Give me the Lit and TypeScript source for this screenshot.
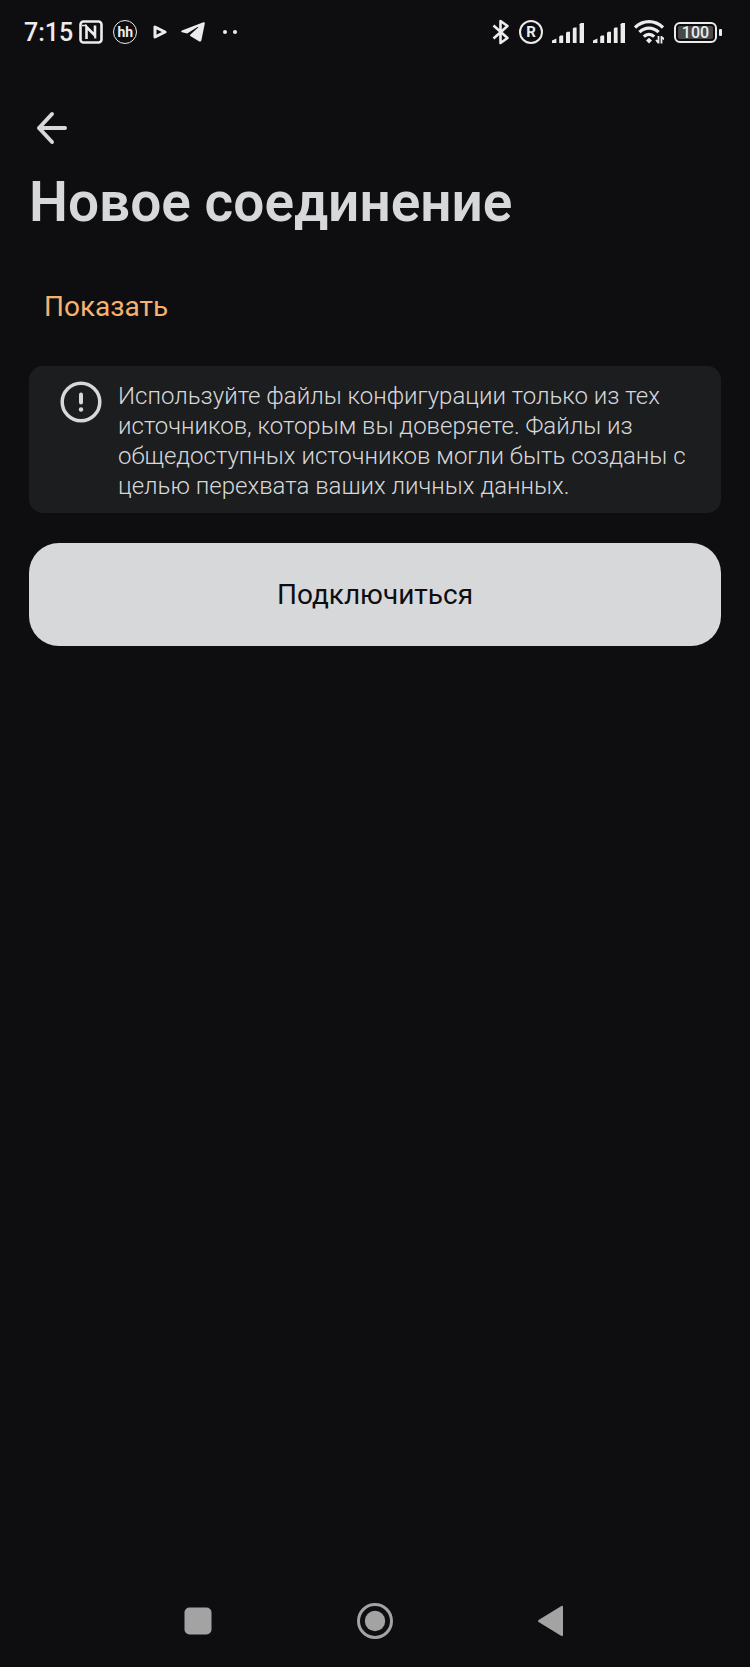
import { LitElement, html, css, svg } from "lit";
import { customElement } from "lit/decorators.js";

@customElement("status-bar")
class StatusBar extends LitElement {
  static styles = css`
    :host {
      display: flex;
      justify-content: space-between;
      align-items: center;
      height: 64px;
      padding: 0 28px 0 24px;
      color: #ececec;
      font-family: Roboto, sans-serif;
    }
    .group {
      display: flex;
      align-items: center;
    }
    .left {
      gap: 10px;
    }
    .right {
      gap: 9px;
    }
    .clock {
      display: flex;
      align-items: center;
      gap: 6px;
      font-size: 25px;
      font-weight: 500;
    }
    svg {
      display: block;
      flex: none;
    }
    .ring {
      box-sizing: border-box;
      display: grid;
      place-items: center;
      width: 24px;
      height: 24px;
      border: 2px solid currentColor;
      border-radius: 50%;
      font-size: 15px;
      line-height: 14px;
      font-weight: 700;
    }
    .ring.thin {
      border-width: 1px;
      font-size: 14px;
    }
    .play {
      margin: 0 4px 0 6px;
    }
    .more {
      margin-left: 8px;
    }
    .battery {
      display: flex;
      align-items: center;
      gap: 2px;
      margin-left: 1px;
    }
    .cell {
      box-sizing: border-box;
      width: 43px;
      height: 21px;
      padding: 2px;
      border: 2px solid currentColor;
      border-radius: 6px;
    }
    .level {
      height: 13px;
      border-radius: 2px;
      background: #48484a;
      font-size: 16px;
      line-height: 14px;
      font-weight: 500;
      text-align: center;
    }
    .nub {
      width: 3px;
      height: 7px;
      border-radius: 1px;
      background: currentColor;
    }
  `;

  private signal() {
    return html`<svg width="32" height="21" viewBox="0 0 32 21" fill="currentColor" aria-hidden="true">
      <path d="M0 21v-2.4L4.4 16.400V21z" />
      <path d="M7.200 21v-6.400l1.200-1h2.800V21z" />
      <path d="M14 21V10.800l1.200-1H18V21z" />
      <path d="M20.800 21V6.600l1.200-1h2.600V21z" />
      <path d="M27.600 21V2.200L28.800 1H32v20z" />
    </svg>`;
  }

  render() {
    return html`
      <div class="group left">
        <div class="clock">
          <span>7:15</span>
          <svg width="24" height="24" viewBox="0 0 24 24" fill="none" stroke="currentColor" aria-hidden="true">
            <rect x="1.500" y="1.500" width="21" height="21" rx="3" stroke-width="2.600" />
            <path d="M7.500 19V7L16 15.500V5.500" stroke-width="2.600" />
            <path d="M3 5.500h5M16 18.500V15" stroke-width="1.600" />
          </svg>
        </div>
        <span class="ring thin">hh</span>
        <svg class="play" width="14" height="14" viewBox="0 0 14 14" fill="none" stroke="currentColor" aria-hidden="true">
          <path d="M2 2v10l10-5z" stroke-width="3" stroke-linejoin="round" />
        </svg>
        <svg width="24" height="20" viewBox="0 0 24 20" fill="currentColor" aria-hidden="true">
          <path d="M22.400.300.900 8.600c-1 .5-.9 1.300.1 1.600l5.200 1.400L16.500 5c.6-.3 1 0 .6.400L9.200 12.800c-.4.4-.3.900.1 1.200l8.600 5.300c1.200.6 2.200.3 2.500-1.100L23.800 1.500c.2-1-.5-1.600-1.400-1.200z" />
        </svg>
        <svg class="more" width="14" height="4" viewBox="0 0 14 4" fill="currentColor" aria-hidden="true">
          <circle cx="2" cy="2" r="2" />
          <circle cx="12" cy="2" r="2" />
        </svg>
      </div>
      <div class="group right">
        <svg width="18" height="26" viewBox="0 0 18 26" fill="none" stroke="currentColor" stroke-width="2.600" aria-hidden="true">
          <path d="M1.500 6.500 15.500 19 8.500 24V2l7 5L1.500 19.500" stroke-linejoin="round" />
        </svg>
        <span class="ring">R</span>
        ${this.signal()} ${this.signal()}
        <svg width="30" height="24" viewBox="0 0 30 24" fill="none" stroke="currentColor" stroke-width="3.200" aria-hidden="true">
          <path d="M1 7.600C9-.4 21-.4 29 7.600" />
          <path d="M5.400 12.200c5.500-5.400 13.700-5.400 19.200 0" />
          <path d="M9.800 16.600c3-3 7.400-3 10.400 0" />
          <path d="M15 17.800l3 2.800-3 2.800-3-2.800z" fill="currentColor" stroke="none" />
          <path d="M24.500 16v7.500M22 20l2.500 3M27.500 23.500V16M30 19.500 27.500 16.500" stroke-width="1.800" />
        </svg>
        <div class="battery">
          <div class="cell"><div class="level">100</div></div>
          <div class="nub"></div>
        </div>
      </div>
    `;
  }
}

@customElement("system-nav")
class SystemNav extends LitElement {
  static styles = css`
    :host {
      display: grid;
      grid-template-columns: repeat(3, 1fr);
      height: 92px;
      padding: 0 110px;
    }
    button {
      display: grid;
      place-items: center;
      padding: 0;
      border: 0;
      background: none;
      color: #a3a3a3;
    }
  `;

  private item(label: string, shape: unknown) {
    return html`<button aria-label=${label}>
      <svg width="38" height="38" viewBox="0 0 38 38" fill="currentColor">${shape}</svg>
    </button>`;
  }

  render() {
    return html`
      ${this.item("Недавние", svg`<rect x="5.500" y="5.500" width="27" height="27" rx="5" />`)}
      ${this.item(
        "Домой",
        svg`<circle cx="19" cy="19" r="16.500" fill="none" stroke="currentColor" stroke-width="3" /><circle cx="19" cy="19" r="10.200" />`
      )}
      ${this.item("Назад", svg`<path d="M6 17.700 28 4.200q2-1 2 1v27.600q0 2-2 1L6 20.300q-2-1.300 0-2.600z" />`)}
    `;
  }
}

@customElement("app-root")
class AppRoot extends LitElement {
  static styles = css`
    :host {
      display: flex;
      flex-direction: column;
      min-height: 100vh;
      background: #0e0e10;
      color: #d7d8da;
      font-family: Roboto, sans-serif;
    }
    main {
      flex: 1;
      display: flex;
      flex-direction: column;
      align-items: flex-start;
      padding: 40px 29px;
    }
    button {
      padding: 0;
      border: 0;
      background: none;
      color: inherit;
      font: inherit;
    }
    svg {
      display: block;
      flex: none;
    }
    .back {
      padding: 6px;
    }
    h1 {
      margin: 12px 0 0;
      font-size: 55px;
      line-height: 72px;
      font-weight: 600;
    }
    .reveal {
      margin-top: 49px;
      padding: 0 15px;
      color: #f6b26f;
      font-size: 28px;
      line-height: 40px;
    }
    .notice {
      box-sizing: border-box;
      display: flex;
      align-items: flex-start;
      gap: 16px;
      width: 100%;
      margin-top: 39px;
      padding: 15px 32px 12px 31px;
      border-radius: 14px;
      background: #1c1d1f;
    }
    .notice p {
      margin: 0;
      font-size: 24px;
      line-height: 30px;
      font-weight: 300;
    }
    .connect {
      width: 100%;
      margin-top: 30px;
      padding: 32px;
      border-radius: 30px;
      background: #d7d8da;
      color: #0e0e10;
      font-size: 28px;
      line-height: 39px;
    }
  `;

  render() {
    return html`
      <status-bar></status-bar>
      <main>
        <button class="back" aria-label="Назад">
          <svg width="34" height="38" viewBox="0 0 34 38" fill="none" stroke="currentColor" stroke-width="4" stroke-linecap="round" stroke-linejoin="round">
            <path d="M17 4 4 18l13 14M4 18h26" />
          </svg>
        </button>
        <h1>Новое соединение</h1>
        <button class="reveal">Показать</button>
        <section class="notice">
          <svg width="42" height="42" viewBox="0 0 42 42" fill="none" stroke="currentColor" aria-hidden="true">
            <circle cx="21" cy="21" r="18.800" stroke-width="3.500" />
            <path d="M21 13.500v8" stroke-width="4" stroke-linecap="round" />
            <circle cx="21" cy="28.500" r="2.200" fill="currentColor" stroke="none" />
          </svg>
          <p>
            Используйте файлы конфигурации только из тех источников, которым вы доверяете. Файлы из
            общедоступных источников могли быть созданы с целью перехвата ваших личных данных.
          </p>
        </section>
        <button class="connect">Подключиться</button>
      </main>
      <system-nav></system-nav>
    `;
  }
}
